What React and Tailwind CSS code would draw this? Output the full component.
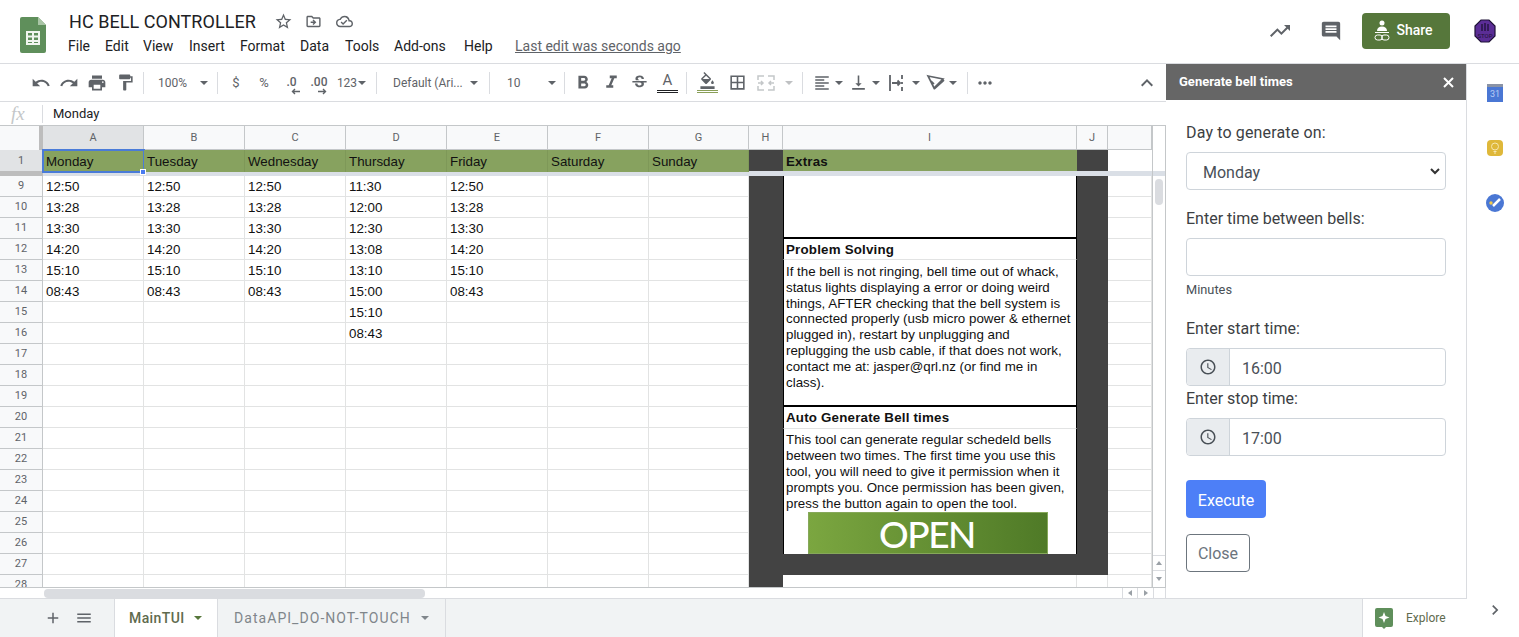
import {
  MdUndo, MdRedo, MdPrint, MdFormatPaint, MdFormatBold, MdFormatItalic, MdStrikethroughS,
  MdFormatColorFill, MdBorderAll, MdFormatAlignLeft, MdVerticalAlignBottom, MdMoreHoriz,
  MdExpandLess, MdTrendingUp, MdInsertComment, MdAdd, MdMenu, MdChevronRight,
  MdStarBorder, MdOutlineDriveFileMove, MdOutlineCloudDone, MdAccessTime,
} from "react-icons/md";

const COLS = "grid grid-cols-[43px_101px_101px_101px_101px_101px_101px_100px_34px_294px_31px_44px]";
const LETTERS = ["A", "B", "C", "D", "E", "F", "G", "H", "I", "J", ""];
const DAYS = ["Monday", "Tuesday", "Wednesday", "Thursday", "Friday", "Saturday", "Sunday"];
const MENU = [
  ["File", "w-[37px]"], ["Edit", "w-[38px]"], ["View", "w-[46px]"], ["Insert", "w-[51px]"], ["Format", "w-[60px]"],
  ["Data", "w-[45px]"], ["Tools", "w-[49px]"], ["Add-ons", "w-[70px]"], ["Help", "w-[51px]"],
];

const TIMES = [
  ["12:50", "12:50", "12:50", "11:30", "12:50"],
  ["13:28", "13:28", "13:28", "12:00", "13:28"],
  ["13:30", "13:30", "13:30", "12:30", "13:30"],
  ["14:20", "14:20", "14:20", "13:08", "14:20"],
  ["15:10", "15:10", "15:10", "13:10", "15:10"],
  ["08:43", "08:43", "08:43", "15:00", "08:43"],
  ["", "", "", "15:10", ""],
  ["", "", "", "08:43", ""],
];

const Caret = ({ className = "" }) => (
  <span className={`inline-block shrink-0 w-0 h-0 border-x-[4px] border-x-transparent border-t-[4px] border-t-[#5f6368] ${className}`} />
);

const Sep = () => <div className="w-px h-[22px] bg-[#dadce0] shrink-0" />;

const ToolBtn = ({ w, children, className = "" }) => (
  <div className={`flex items-center justify-center shrink-0 text-[#5f6368] ${w} ${className}`}>{children}</div>
);

const SheetsLogo = () => (
  <svg width="26" height="36" viewBox="0 0 26 36">
    <path d="M2 0h16l8 8v26a2 2 0 0 1-2 2H2a2 2 0 0 1-2-2V2a2 2 0 0 1 2-2z" fill="#5f8f5b" />
    <path d="M18 0l8 8h-8z" fill="#a9c5a5" />
    <path d="M6 14h14v14H6z M8 16v2.500h4V16z M14 16v2.500h4V16z M8 20.500v2.500h4v-2.500z M14 20.500v2.500h4v-2.500z M8 25v1h4v-1z M14 25v1h4v-1z" fill="#f1f5ef" fillRule="evenodd" />
  </svg>
);

const ShareIcon = () => (
  <svg width="16" height="22" viewBox="0 0 16 22" fill="none">
    <circle cx="8" cy="3" r="2.500" fill="#fff" />
    <path d="M3 11c0-3 2-4.500 5-4.500s5 1.500 5 4.500z" fill="#fff" />
    <path d="M1 12.500h14" stroke="#fff" />
    <rect x="1" y="15" width="7.500" height="5" rx="2.500" stroke="#fff" />
    <rect x="7.500" y="15" width="7.500" height="5" rx="2.500" stroke="#fff" />
  </svg>
);

const Avatar = () => (
  <svg width="22" height="24" viewBox="0 0 22 24">
    <path d="M7 1h8l6 6v10l-6 6H7l-6-6V7z" fill="#5b2d96" stroke="#1e1236" strokeWidth="1.200" />
    <path d="M8 5v7M11 4v8M14 5v7" stroke="#1e1236" strokeWidth="1.300" />
    <text x="11" y="19" textAnchor="middle" fontSize="6" fontFamily="Roboto, sans-serif" fill="#1e1236">STOP</text>
  </svg>
);

const MergeIcon = () => (
  <svg width="18" height="18" viewBox="0 0 18 18" fill="none" stroke="#c4c7c9" strokeWidth="1.500">
    <path d="M1 6V2h6M11 2h6v4M1 12v4h6M11 16h6v-4M1 9h5M12 9h5M4 7l2 2-2 2M14 7l-2 2 2 2" />
  </svg>
);

const WrapIcon = () => (
  <svg width="18" height="18" viewBox="0 0 18 18" fill="none" stroke="#5f6368" strokeWidth="1.800">
    <path d="M3 1v16M15 1v4M15 8v2M15 13v4M5 9h8M10.500 6.500L13 9l-2.500 2.500" />
  </svg>
);

const RotateIcon = () => (
  <svg width="20" height="18" viewBox="0 0 20 18" fill="none" stroke="#5f6368" strokeWidth="1.700">
    <path d="M2 2l15 3-9 9zM5 7l3 3M8 15l10-9" />
  </svg>
);

const Header = () => (
  <div className="h-16 shrink-0 flex border-b border-[#dadce0] bg-white">
    <div className="w-[69px] shrink-0 pl-5 pt-[17px]"><SheetsLogo /></div>
    <div className="flex-1 flex flex-col">
      <div className="flex items-center h-[27px] mt-2">
        <span className="text-[18px] text-[#202124] w-[205px] tracking-[0.05px]">HC BELL CONTROLLER</span>
        <MdStarBorder size={19} className="text-[#5f6368]" />
        <MdOutlineDriveFileMove size={17} className="text-[#5f6368] ml-[12px]" />
        <MdOutlineCloudDone size={17} className="text-[#5f6368] ml-[14px]" />
      </div>
      <div className="flex items-center h-[22px] -ml-px text-[14px] text-[#202124]">
        {MENU.map(([m, w]) => <span key={m} className={w}>{m}</span>)}
        <span className="text-[#5f6368] underline">Last edit was seconds ago</span>
      </div>
    </div>
    <div className="flex items-center pb-[2px]">
      <MdTrendingUp size={24} className="text-[#5f6368] mr-[28px]" />
      <MdInsertComment size={22} className="text-[#5f6368] mr-[20px]" />
      <div className="w-[88px] h-9 rounded bg-[#56773b] text-white text-[14px] font-medium flex items-center justify-center gap-[6px] pr-[5px]">
        <ShareIcon />
        Share
      </div>
      <div className="w-[69px] pl-px flex justify-center"><Avatar /></div>
    </div>
  </div>
);

const ArrowLeft = () => (
  <svg width="9" height="7" viewBox="0 0 9 7" className="ml-[7px]"><path d="M9 3.500H2M4 1L1.500 3.500 4 6" fill="none" stroke="#5f6368" strokeWidth="1.400" /></svg>
);

const ArrowRight = () => (
  <svg width="9" height="7" viewBox="0 0 9 7" className="ml-[7px]"><path d="M0 3.500h7M5 1l2.500 2.500L5 6" fill="none" stroke="#5f6368" strokeWidth="1.400" /></svg>
);

const Toolbar = () => (
  <div className="h-[38px] shrink-0 flex items-center border-b border-[#dadce0] pl-[27px] text-[12px] text-[#5f6368]">
    <ToolBtn w="w-[28px]"><MdUndo size={20} /></ToolBtn>
    <ToolBtn w="w-[28px]"><MdRedo size={20} /></ToolBtn>
    <ToolBtn w="w-[28px]"><MdPrint size={20} /></ToolBtn>
    <ToolBtn w="w-[28px]"><MdFormatPaint size={19} /></ToolBtn>
    <div className="w-[4px]" />
    <Sep />
    <ToolBtn w="w-[73px]" className="gap-[13px] pl-[5px]">100% <Caret /></ToolBtn>
    <Sep />
    <ToolBtn w="w-[36px]" className="text-[13px]">$</ToolBtn>
    <ToolBtn w="w-[20px]" className="text-[13px]">%</ToolBtn>
    <ToolBtn w="w-[33px]" className="flex-col leading-[11px] font-medium pl-[2px] pt-[6px]">.0<ArrowLeft /></ToolBtn>
    <ToolBtn w="w-[22px]" className="flex-col leading-[11px] font-medium pl-[2px] pt-[6px]">.00<ArrowRight /></ToolBtn>
    <ToolBtn w="w-[47px]" className="gap-px pl-[1px] pr-[3px]">123<Caret /></ToolBtn>
    <Sep />
    <ToolBtn w="w-[112px]" className="justify-start! gap-[7px] pl-[16px] whitespace-nowrap">Default (Ari... <Caret /></ToolBtn>
    <Sep />
    <ToolBtn w="w-[74px]" className="justify-start! gap-[27px] pl-[17px]">10 <Caret /></ToolBtn>
    <Sep />
    <ToolBtn w="w-[34px]" className="pl-[1px]"><MdFormatBold size={22} /></ToolBtn>
    <ToolBtn w="w-[24px]"><MdFormatItalic size={21} /></ToolBtn>
    <ToolBtn w="w-[32px]"><MdStrikethroughS size={19} /></ToolBtn>
    <ToolBtn w="w-[24px]" className="flex-col text-[15px] leading-[17px] pl-[1px]">
      A
      <span className="w-[21px] h-[3px] mt-[1px] border-y border-[#202124]" />
    </ToolBtn>
    <div className="w-[7px]" />
    <Sep />
    <ToolBtn w="w-[40px]" className="flex-col">
      <MdFormatColorFill size={17} />
      <span className="w-[21px] h-[3px] mt-[1px] border-y border-[#8a9f58]" />
    </ToolBtn>
    <ToolBtn w="w-[20px]"><MdBorderAll size={19} /></ToolBtn>
    <ToolBtn w="w-[38px]"><MergeIcon /></ToolBtn>
    <Caret className="opacity-40" />
    <div className="w-[9px]" />
    <Sep />
    <ToolBtn w="w-[36px]" className="pl-[2px]"><MdFormatAlignLeft size={18} /></ToolBtn>
    <Caret className="-ml-[4px]" />
    <ToolBtn w="w-[30px]"><MdVerticalAlignBottom size={19} /></ToolBtn>
    <Caret className="-ml-[1px]" />
    <ToolBtn w="w-[32px]"><WrapIcon /></ToolBtn>
    <Caret />
    <ToolBtn w="w-[31px]"><RotateIcon /></ToolBtn>
    <Caret className="-ml-[2px]" />
    <div className="w-[10px]" />
    <Sep />
    <ToolBtn w="w-[33px]"><MdMoreHoriz size={20} /></ToolBtn>
    <div className="flex-1" />
    <ToolBtn w="w-[38px]"><MdExpandLess size={24} /></ToolBtn>
  </div>
);

const FormulaBar = () => (
  <div className="h-[24px] shrink-0 flex items-center border-b border-[#c4c7c9]">
    <span className="w-[42px] pl-[11px] text-[19px] italic text-[#c4c7c9] font-['Liberation_Serif',serif] leading-none">fx</span>
    <div className="w-px h-[18px] bg-[#dadce0]" />
    <span className="pl-[10px] text-[13px] text-[#202124]">Monday</span>
  </div>
);

const Cell = ({ children }) => (
  <div className="border-r border-b border-[#e2e3e3] pl-[3px] flex items-end pb-[1px] leading-[16px] whitespace-nowrap overflow-hidden">{children}</div>
);

const RowHead = ({ n, active }) => (
  <div className={`border-r border-b border-[#c4c7c9] flex items-center justify-center text-[11px] text-[#5f6368] font-['Roboto',sans-serif] ${active ? "bg-[#e1e3e5] pt-[1px]" : "bg-[#f8f9fa]"}`}>{n}</div>
);

const FrozenRows = () => (
  <div className="shrink-0">
    <div className={`${COLS} h-[24px]`}>
      <div className="bg-[#f8f9fa] border-r-[4px] border-[#bdbdbd]" />
      {LETTERS.map((l, i) => (
        <div key={i} className={`border-r border-b border-[#c4c7c9] flex items-center justify-center pt-[1px] text-[11px] text-[#5f6368] ${i === 0 ? "bg-[#e1e3e5]" : "bg-[#f8f9fa]"}`}>{l}</div>
      ))}
    </div>
    <div className={`${COLS} h-[21px] text-[13.33px] text-[#111] font-['Liberation_Sans',sans-serif]`}>
      <RowHead n={1} active />
      {DAYS.map((d, i) => (
        <div key={d} className={`bg-[#87a25f] pl-[3px] pt-[2px] flex items-center relative border-r border-[#7e9858] ${i === 0 ? "outline-2 -outline-offset-1 outline-[#4a7bd8]" : ""}`}>
          {d}
          {i === 0 && <span className="absolute -right-[3px] -bottom-[3px] w-[6px] h-[6px] bg-[#4a7bf0] border border-white z-10" />}
        </div>
      ))}
      <div className="bg-[#434343]" />
      <div className="bg-[#87a25f] pl-[3px] pt-[2px] flex items-center font-bold tracking-[0.2px]">Extras</div>
      <div className="bg-[#434343]" />
      <div className="border-b border-[#e2e3e3]" />
    </div>
    <div className="flex h-[5px]">
      <div className="w-[43px] bg-[#bdbdbd]" />
      <div className="flex-1 bg-[#dadfe6]" />
    </div>
  </div>
);

const BodyGrid = () => {
  const rowNums = Array.from({ length: 20 }, (_, i) => i + 9);
  return (
    <div className="flex-1 overflow-hidden">
      <div className={`${COLS} auto-rows-[21px] text-[13.33px] text-[#111] font-['Liberation_Sans',sans-serif]`}>
        {/* merged cells are placed explicitly, the plain cells flow around them */}
        <div className="col-start-9 row-start-1 row-span-20 bg-[#434343]" />
        <div className="col-start-10 row-start-1 row-span-3 bg-white border-x border-b-2 border-black" />
        <div className="col-start-10 row-start-4 border-x border-b-[#e2e3e3] border-b border-x-black bg-white font-bold tracking-[0.2px] pl-[2px] pt-[2px] flex items-center leading-none">Problem Solving</div>
        <div className="col-start-10 row-start-5 row-span-8 border-x border-black bg-white flex flex-col">
          <div className="flex-1 pl-[2px] pt-[4px] leading-[15.8px] whitespace-nowrap">
            If the bell is not ringing, bell time out of whack,<br />
            status lights displaying a error or doing weird<br />
            things, AFTER checking that the bell system is<br />
            connected properly (usb micro power &amp; ethernet<br />
            plugged in), restart by unplugging and<br />
            replugging the usb cable, if that does not work,<br />
            contact me at: jasper@qrl.nz (or find me in<br />
            class).
          </div>
          <div className="h-[23px] shrink-0 border-t-2 border-black font-bold tracking-[0.2px] pl-[2px] flex items-center leading-none">Auto Generate Bell times</div>
        </div>
        <div className="col-start-10 row-start-13 row-span-4 border-x border-black border-t-[#e2e3e3] border-t bg-white pl-[2px] pt-[3px] leading-[15.9px] whitespace-nowrap">
          This tool can generate regular schedeld bells<br />
          between two times. The first time you use this<br />
          tool, you will need to give it permission when it<br />
          prompts you. Once permission has been given,<br />
          press the button again to open the tool.
        </div>
        <div className="col-start-10 row-start-17 row-span-2 border-x border-black bg-white flex justify-center pr-[4px]">
          <div className="w-[240px] bg-gradient-to-r from-[#7ba640] to-[#4f7a27] border border-[#86a85a] flex items-center justify-center pr-[2px] text-white text-[37px] leading-none font-['Lato',sans-serif] font-medium tracking-[-1.500px]">OPEN</div>
        </div>
        <div className="col-start-10 row-start-19 bg-[#434343]" />
        <div className="col-start-11 row-start-1 row-span-19 bg-[#434343]" />
        {rowNums.map((n, r) => (
          <div key={n} className="contents">
            <RowHead n={n} />
            {[0, 1, 2, 3, 4, 5, 6].map((c) => (
              <Cell key={c}>{TIMES[r] ? TIMES[r][c] : ""}</Cell>
            ))}
            {n === 28 && <Cell />}
            {n === 28 && <Cell />}
            <Cell />
          </div>
        ))}
      </div>
    </div>
  );
};

const ScrollStrip = () => (
  <div className="w-[14px] shrink-0 border-x border-[#c4c7c9] flex flex-col items-center">
    <div className="w-full h-[45px] shrink-0" />
    <div className="w-full h-[5px] shrink-0 bg-[#dadfe6]" />
    <div className="w-2 h-[26px] mt-[3px] rounded bg-[#dadce0]" />
    <div className="mt-auto w-full flex flex-col mb-px">
      <div className="h-[16px] border-y border-[#dadce0] flex items-center justify-center"><span className="w-0 h-0 border-x-[3px] border-x-transparent border-b-[4px] border-b-[#9aa0a6]" /></div>
      <div className="h-[15px] flex items-center justify-center"><span className="w-0 h-0 border-x-[3px] border-x-transparent border-t-[4px] border-t-[#9aa0a6]" /></div>
    </div>
  </div>
);

const HScroll = () => (
  <div className="h-[11px] shrink-0 border-t border-[#c4c7c9] flex items-center pl-[44px]">
    <div className="w-[381px] h-[9px] rounded bg-[#dadce0]" />
    <div className="flex-1" />
    <div className="w-[15px] h-full border-l border-[#dadce0] flex items-center justify-center"><span className="w-0 h-0 border-y-[3px] border-y-transparent border-r-[4px] border-r-[#9aa0a6]" /></div>
    <div className="w-[16px] h-full border-l border-[#dadce0] flex items-center justify-center"><span className="w-0 h-0 border-y-[3px] border-y-transparent border-l-[4px] border-l-[#9aa0a6]" /></div>
    <div className="w-[13px] h-full border-x border-[#dadce0]" />
  </div>
);

const Label = ({ children, className = "" }) => (
  <label className={`block text-[16px] leading-6 text-[#3c4043] ${className}`}>{children}</label>
);

const TimeField = ({ value }) => (
  <div className="flex h-[38px] border border-[#ced4da] rounded">
    <div className="w-[43px] shrink-0 bg-[#e9ecef] border-r border-[#ced4da] rounded-l flex items-center justify-center text-[#495057]">
      <MdAccessTime size={18} />
    </div>
    <div className="flex-1 pl-3 pt-1 flex items-center text-[16px] text-[#495057]">{value}</div>
  </div>
);

const Panel = () => (
  <div className="w-[301px] shrink-0 border-r border-[#dadce0] flex flex-col bg-white font-['Roboto',sans-serif]">
    <div className="h-[36px] shrink-0 bg-[#666666] text-white flex items-center justify-between pl-[13px] pr-[12px]">
      <span className="text-[13px] font-bold">Generate bell times</span>
      <svg width="11" height="11" viewBox="0 0 11 11"><path d="M1 1l9 9M10 1l-9 9" stroke="#fff" strokeWidth="2" /></svg>
    </div>
    <div className="px-5 pt-[21px] flex flex-col">
      <Label className="mb-[7px] tracking-[0.15px]">Day to generate on:</Label>
      <div className="h-[38px] border border-[#ced4da] rounded flex items-center justify-between pl-4 pr-1 text-[16px] text-[#495057]">
        <span className="pt-1">Monday</span>
        <svg width="12" height="12" viewBox="0 0 12 12"><path d="M2 4l4 4 4-4" fill="none" stroke="#333" strokeWidth="2" /></svg>
      </div>
      <Label className="mt-[17px] mb-[7px]">Enter time between bells:</Label>
      <div className="h-[38px] border border-[#ced4da] rounded" />
      <span className="text-[12.8px] leading-[19px] mt-1 text-[#495057]">Minutes</span>
      <Label className="mt-[18px] mb-[7px]">Enter start time:</Label>
      <TimeField value="16:00" />
      <Label className="mt-px mb-[7px]">Enter stop time:</Label>
      <TimeField value="17:00" />
      <button className="mt-6 w-20 h-[38px] pt-[3px] rounded bg-[#4d7ff7] text-white text-[16px]">Execute</button>
      <button className="mt-[16px] w-16 h-[38px] pt-[2px] rounded border border-[#6c757d] text-[#6c757d] text-[16px]">Close</button>
    </div>
  </div>
);

const SheetTabs = () => (
  <div className="h-[39px] shrink-0 flex bg-[#f1f3f4] border-t border-[#dadce0] font-['Roboto',sans-serif]">
    <div className="w-[114px] flex items-center pl-[44px] gap-[13px] text-[#5f6368]">
      <MdAdd size={18} />
      <MdMenu size={18} />
    </div>
    <div className="w-[104px] bg-white border-x border-[#dadce0] flex items-center pl-[14px] gap-[9px] text-[14px] font-medium tracking-[0.4px] text-[#5f6b4e]">
      MainTUI <Caret className="border-t-[#56773b]" />
    </div>
    <div className="w-[228px] border-r border-[#dadce0] flex items-center pl-[16px] gap-[10px] text-[14px] tracking-[1.05px] text-[#80868b] whitespace-nowrap">
      DataAPI_DO-NOT-TOUCH <Caret className="border-t-[#80868b]" />
    </div>
    <div className="flex-1" />
    <div className="w-[105px] bg-white border-l border-[#dadce0] flex items-center pl-[12px] gap-[13px] text-[12px] text-[#5f6b4e]">
      <svg width="18" height="21" viewBox="0 0 18 21">
        <path d="M2 0h14a2 2 0 0 1 2 2v15a2 2 0 0 1-2 2h-5l-2 2-2-2H2a2 2 0 0 1-2-2V2a2 2 0 0 1 2-2z" fill="#5f8f5b" />
        <path d="M9 4l1.500 4 4 1.500-4 1.500L9 15l-1.500-4-4-1.500 4-1.500z" fill="#fff" />
      </svg>
      Explore
    </div>
  </div>
);

const SideRail = () => (
  <div className="flex-1 flex flex-col items-center pl-[4px] bg-white">
    <div className="w-[16px] h-[18px] mt-[20px] bg-[#4a77d4] border-t-[3px] border-[#8a93a6] flex items-center justify-center text-[9px] text-[#b9cdf5]">31</div>
    <div className="w-[16px] h-[16px] mt-[38px] bg-[#dfb83a] rounded-sm flex items-center justify-center text-[#f6e7b0]">
      <svg width="10" height="12" viewBox="0 0 10 12"><circle cx="5" cy="4.500" r="3.500" fill="none" stroke="currentColor" /><path d="M3.500 9.500h3M4 11h2" stroke="currentColor" /></svg>
    </div>
    <div className="w-[18px] h-[18px] mt-[38px] rounded-full bg-[#4a77d4] flex items-center justify-center">
      <svg width="14" height="14" viewBox="0 0 14 14"><path d="M5 10l7-7" stroke="#fff" strokeWidth="2.500" /><circle cx="3" cy="7" r="1.700" fill="#f2c94c" /></svg>
    </div>
    <div className="flex-1" />
    <MdChevronRight size={20} className="text-[#5f6368] mb-[17px]" />
  </div>
);

export default function App() {
  return (
    <div className="w-[1519px] h-[637px] flex flex-col overflow-hidden bg-white font-['Roboto',sans-serif]">
      <Header />
      <div className="flex-1 flex min-h-0">
        <div className="w-[1467px] shrink-0 flex flex-col">
          <div className="flex-1 flex min-h-0">
            <div className="w-[1166px] shrink-0 flex flex-col min-h-0">
              <Toolbar />
              <FormulaBar />
              <div className="flex-1 flex min-h-0">
                <div className="w-[1152px] shrink-0 flex flex-col min-h-0 overflow-hidden">
                  <FrozenRows />
                  <BodyGrid />
                </div>
                <ScrollStrip />
              </div>
              <HScroll />
            </div>
            <Panel />
          </div>
          <SheetTabs />
        </div>
        <SideRail />
      </div>
    </div>
  );
}
